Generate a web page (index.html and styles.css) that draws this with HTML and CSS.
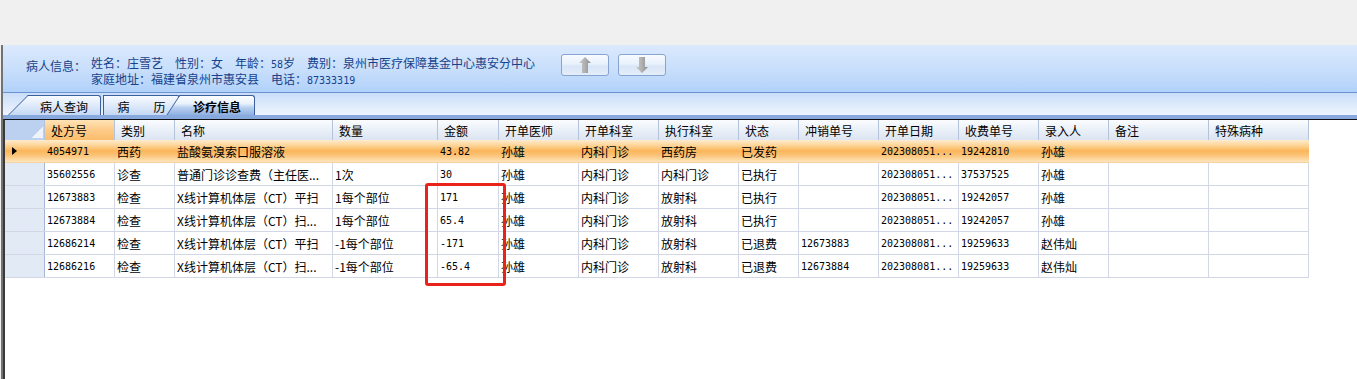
FILE: index.html
```html
<!DOCTYPE html>
<html>
<head>
	<meta charset="utf-8">
	<title>诊疗信息</title>
	<link rel="stylesheet" href="styles.css">
</head>
<body>
<div class="top"></div>
<div class="window">
	<div class="info">
		<div class="info-label">病人信息：</div>
		<div class="info-lines">
			<p>姓名：庄雪艺　性别：女　年龄：<span class="n">58</span>岁　费别：泉州市医疗保障基金中心惠安分中心</p>
			<p>家庭地址：福建省泉州市惠安县　电话：<span class="n">87333319</span></p>
		</div>
		<div class="nav">
			<span class="nav-btn">
				<svg width="12" height="16" viewBox="0 0 12 16">
					<defs>
						<linearGradient id="ag" x1="0" y1="0" x2="1" y2="0">
							<stop offset="0" stop-color="#c8c8c8"/>
							<stop offset="0.5" stop-color="#b0b0b0"/>
							<stop offset="1" stop-color="#8a8a8a"/>
						</linearGradient>
					</defs>
					<polygon points="6,0 12,6 9,6 9,16 3,16 3,6 0,6" fill="url(#ag)"/>
				</svg>
			</span>
			<span class="nav-btn">
				<svg width="12" height="16" viewBox="0 0 12 16">
					<polygon points="3,0 9,0 9,10 12,10 6,16 0,10 3,10" fill="url(#ag)"/>
				</svg>
			</span>
		</div>
	</div>
	<div class="tabbar">
		<div class="tab tab-query">病人查询</div>
		<div class="tab tab-history">病　　历</div>
		<div class="tab tab-cure">诊疗信息</div>
	</div>
	<div class="band"></div>
	<div class="grid">
		<div class="row head">
			<div class="corner"></div>
			<div class="sort">处方号</div>
			<div>类别</div>
			<div>名称</div>
			<div>数量</div>
			<div>金额</div>
			<div>开单医师</div>
			<div>开单科室</div>
			<div>执行科室</div>
			<div>状态</div>
			<div>冲销单号</div>
			<div>开单日期</div>
			<div>收费单号</div>
			<div>录入人</div>
			<div>备注</div>
			<div>特殊病种</div>
		</div>
		<div class="row sel">
			<div class="rh"><i class="cur"></i></div>
			<div class="n">4054971</div>
			<div>西药</div>
			<div>盐酸氨溴索口服溶液</div>
			<div></div>
			<div class="n">43.82</div>
			<div>孙雄</div>
			<div>内科门诊</div>
			<div>西药房</div>
			<div>已发药</div>
			<div></div>
			<div class="n">202308051...</div>
			<div class="n">19242810</div>
			<div>孙雄</div>
			<div></div>
			<div></div>
		</div>
		<div class="row">
			<div class="rh"></div>
			<div class="n">35602556</div>
			<div>诊查</div>
			<div>普通门诊诊查费（主任医...</div>
			<div>1次</div>
			<div class="n">30</div>
			<div>孙雄</div>
			<div>内科门诊</div>
			<div>内科门诊</div>
			<div>已执行</div>
			<div></div>
			<div class="n">202308051...</div>
			<div class="n">37537525</div>
			<div>孙雄</div>
			<div></div>
			<div></div>
		</div>
		<div class="row">
			<div class="rh"></div>
			<div class="n">12673883</div>
			<div>检查</div>
			<div>X线计算机体层（CT）平扫</div>
			<div>1每个部位</div>
			<div class="n">171</div>
			<div>孙雄</div>
			<div>内科门诊</div>
			<div>放射科</div>
			<div>已执行</div>
			<div></div>
			<div class="n">202308051...</div>
			<div class="n">19242057</div>
			<div>孙雄</div>
			<div></div>
			<div></div>
		</div>
		<div class="row">
			<div class="rh"></div>
			<div class="n">12673884</div>
			<div>检查</div>
			<div>X线计算机体层（CT）扫...</div>
			<div>1每个部位</div>
			<div class="n">65.4</div>
			<div>孙雄</div>
			<div>内科门诊</div>
			<div>放射科</div>
			<div>已执行</div>
			<div></div>
			<div class="n">202308051...</div>
			<div class="n">19242057</div>
			<div>孙雄</div>
			<div></div>
			<div></div>
		</div>
		<div class="row">
			<div class="rh"></div>
			<div class="n">12686214</div>
			<div>检查</div>
			<div>X线计算机体层（CT）平扫</div>
			<div>-1每个部位</div>
			<div class="n">-171</div>
			<div>孙雄</div>
			<div>内科门诊</div>
			<div>放射科</div>
			<div>已退费</div>
			<div class="n">12673883</div>
			<div class="n">202308081...</div>
			<div class="n">19259633</div>
			<div>赵伟灿</div>
			<div></div>
			<div></div>
		</div>
		<div class="row">
			<div class="rh"></div>
			<div class="n">12686216</div>
			<div>检查</div>
			<div>X线计算机体层（CT）扫...</div>
			<div>-1每个部位</div>
			<div class="n">-65.4</div>
			<div>孙雄</div>
			<div>内科门诊</div>
			<div>放射科</div>
			<div>已退费</div>
			<div class="n">12673884</div>
			<div class="n">202308081...</div>
			<div class="n">19259633</div>
			<div>赵伟灿</div>
			<div></div>
			<div></div>
		</div>
	</div>
</div>
<div class="redbox"></div>
</body>
</html>
```

FILE: styles.css
```css
body{
	margin: 0;
	background: #f0f0f0;
	font: 12px "Noto Sans CJK SC", "Liberation Sans", sans-serif;
	color: #000;
}
p{
	margin: 0;
}
.n{
	font-family: "DejaVu Sans Mono", "Liberation Mono", monospace;
	font-size: 10px;
}
.top{
	height: 45px;
}
.window{
	height: 334px;
	margin-left: 1px;
	border-left: 2px solid #727272;
	display: flex;
	flex-direction: column;
}
/* 病人信息 */
.info{
	height: 47px;
	flex: none;
	display: flex;
	align-items: flex-start;
	padding-left: 23px;
	color: #15428b;
	border-bottom: 1px solid #6b93cf;
	background: linear-gradient(#dbe9fd, #c7defb 55%, #b1d1fa);
}
.info-label{
	width: 65px;
	margin-top: 14px;
	line-height: 14px;
}
.info-lines{
	width: 470px;
	margin-top: 11px;
	line-height: 14px;
	white-space: nowrap;
}
.nav{
	display: flex;
	gap: 9px;
	margin-top: 9px;
}
.nav-btn{
	width: 48px;
	height: 22px;
	box-sizing: border-box;
	border: 1px solid #87a3cf;
	border-radius: 3px;
	background: linear-gradient(#f8fbff, #e9f1fc 45%, #d9e6f8 55%, #e4edf9);
	display: flex;
	align-items: center;
	justify-content: center;
}
/* 标签页 */
.tabbar{
	height: 22px;
	flex: none;
	display: flex;
	align-items: flex-end;
	background: linear-gradient(#c9ddf9, #eff5fe);
}
.tab{
	position: relative;
	z-index: 1;
	box-sizing: border-box;
	height: 20px;
	border-top: 1px solid #3c5e9c;
	border-right: 1px solid #3c5e9c;
	border-top-right-radius: 3px;
	background: linear-gradient(#f8fbff, #dfeafa 50%, #c4d8f4);
	display: flex;
	align-items: center;
	justify-content: center;
	padding-top: 1px;
}
.tab-query{
	margin-left: 25px;
	width: 73px;
	z-index: 2;
}
.tab-query::before,
.tab-cure::before{
	content: "";
	position: absolute;
	z-index: -1;
	top: -1px;
	bottom: 0;
	border-left: 1px solid #3c5e9c;
	border-top: 1px solid #3c5e9c;
	background: inherit;
}
.tab-query::before{
	left: -10px;
	width: 24px;
	transform: skewX(-45deg);
}
.tab-history{
	margin-left: 2px;
	width: 77px;
	border-left: 1px solid #3c5e9c;
}
.tab-cure{
	width: 75px;
	z-index: 3;
	font-weight: bold;
	background: linear-gradient(#fdfeff, #eaf2fc 40%, #bad1f1 60%, #8eb0e1);
}
.tab-cure::before{
	left: -7px;
	width: 20px;
	transform: skewX(-33deg);
}
.band{
	height: 4px;
	flex: none;
	background: #87a9dd;
}
/* 表格 */
.grid{
	flex: 1;
	background: #fff;
	border-top: 1px solid #111;
	border-left: 2px solid #3a3a3a;
}
.row{
	display: grid;
	grid-template-columns: 40px 70px 60px 158px 105px 61px 80px 80px 80px 60px 80px 80px 80px 70px 100px 100px;
	width: 1304px;
	height: 23px;
	box-sizing: border-box;
	border-bottom: 1px solid #d3d7e5;
}
.row > div{
	display: flex;
	align-items: center;
	padding-left: 2px;
	border-right: 1px solid #d3d7e5;
	white-space: nowrap;
	overflow: hidden;
}
.head{
	height: 20px;
	border-bottom: none;
	background: linear-gradient(#fafcfe, #eaf0f8 50%, #dbe4f1);
}
.head > div{
	padding-left: 6px;
	border-right: 1px solid #b4c3da;
}
.head .sort{
	background: linear-gradient(#ffe3b6, #fdcb88 50%, #fbbd6c);
}
.head .corner{
	position: relative;
	padding: 0;
	background: #bcd1ef;
}
.corner::after{
	content: "";
	position: absolute;
	right: 1px;
	bottom: 2px;
	width: 11px;
	height: 11px;
	background: linear-gradient(to bottom right, transparent 50%, #eef3fb 50%);
}
.row .rh{
	padding: 0;
	background: #e2eaf6;
	border-right: 1px solid #a3b6d3;
}
.sel{
	background: linear-gradient(#feecd0 0%, #fdd496 25%, #fbb55a 50%, #fcc47a 70%, #fee5bb 100%);
	border-bottom-color: #f3d3a5;
}
.sel > div{
	border-right-color: transparent;
}
.sel .rh{
	background: transparent;
	border-right-color: transparent;
}
.cur{
	width: 0;
	height: 0;
	margin-left: 7px;
	border-left: 5px solid #000;
	border-top: 4px solid transparent;
	border-bottom: 4px solid transparent;
}
/* 标注框 */
.redbox{
	position: absolute;
	left: 425px;
	top: 183px;
	width: 81px;
	height: 103px;
	box-sizing: border-box;
	border: 3px solid #e9231b;
	border-radius: 3px;
}
```
